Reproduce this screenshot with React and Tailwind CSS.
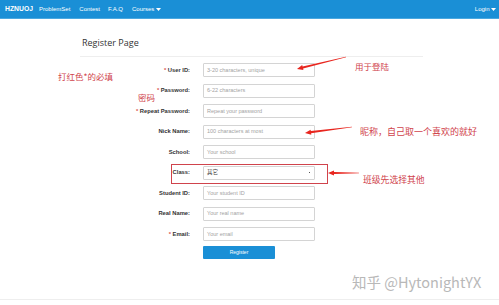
import React from 'react';

const sans = { fontFamily: '"Liberation Sans", Arial, sans-serif' };
const cjk = { fontFamily: '"Noto Sans CJK SC", "Noto Sans", sans-serif' };

const fields = [
  { label: 'User ID:', req: true, ph: '3-20 characters, unique' },
  { label: 'Password:', req: true, ph: '6-22 characters' },
  { label: 'Repeat Password:', req: true, ph: 'Repeat your password' },
  { label: 'Nick Name:', ph: '100 characters at most' },
  { label: 'School:', ph: 'Your school' },
  { label: 'Class:', select: '其它' },
  { label: 'Student ID:', ph: 'Your student ID' },
  { label: 'Real Name:', ph: 'Your real name' },
  { label: 'Email:', req: true, ph: 'Your email' },
];

function Caret({ className }) {
  return (
    <svg width="5" height="3" viewBox="0 0 5 3" className={className}>
      <path d="M0 0 L5 0 L2.5 3 Z" fill="currentColor" />
    </svg>
  );
}

// tapered red stroke, thin at the tail, arrow head at the tip
function arrow(tx, ty, hx, hy) {
  const len = Math.hypot(hx - tx, hy - ty);
  const dx = (hx - tx) / len;
  const dy = (hy - ty) / len;
  const nx = -dy;
  const ny = dx;
  const bx = hx - dx * 6;
  const by = hy - dy * 6;
  const p = [
    [tx + nx * 0.3, ty + ny * 0.3],
    [bx + nx * 1.1, by + ny * 1.1],
    [bx + nx * 2.6, by + ny * 2.6],
    [hx, hy],
    [bx - nx * 2.6, by - ny * 2.6],
    [bx - nx * 1.1, by - ny * 1.1],
    [tx - nx * 0.3, ty - ny * 0.3],
  ];
  return p.map((q) => q[0].toFixed(1) + ',' + q[1].toFixed(1)).join(' ');
}

export default function App() {
  return (
    <div className="relative w-[499px] h-[305px] overflow-hidden bg-white flex flex-col" style={sans}>
      {/* navbar */}
      <nav className="h-[19px] bg-[#1a8fd6] border-b border-[#4aa8e0] flex items-center pl-[5px] pr-[3px] text-white text-[6px]">
        <span className="font-bold text-[6.8px]">HZNUOJ</span>
        <span className="ml-[6px]">ProblemSet</span>
        <span className="ml-[9px]">Contest</span>
        <span className="ml-[8px]">F.A.Q</span>
        <span className="ml-[9px] flex items-center gap-[1.5px]">
          Courses <Caret />
        </span>
        <span className="ml-auto flex items-center gap-[1.5px]">
          Login <Caret />
        </span>
      </nav>

      <div className="pl-[80px] pr-[76px]">
        <h1 className="pt-[18px] pl-[2px] text-[9px] leading-[12px] text-[#333]" style={{ fontFamily: '"Open Sans", sans-serif' }}>
          Register Page
        </h1>
        <div className="mt-[7px] border-t border-[#eeeeee]" />

        <div className="mt-[6px] flex flex-col gap-[6.5px]">
          {fields.map((f) => (
            <div key={f.label} className="flex items-center h-[14px]">
              <div className="w-[110px] text-right font-bold text-[5.8px] text-[#333]">
                {f.req && <span className="text-[#d9534f] mr-[1.5px]">*</span>}
                {f.label}
              </div>
              {f.select ? (
                <div className="ml-[13px] w-[112px] h-[14px] border border-[#d4d4d4] rounded-[1px] flex items-center justify-between pl-[3px] pr-[4px] text-[5.5px] text-[#444]" style={cjk}>
                  <span>{f.select}</span>
                  <span className="w-[1.5px] h-[1.5px] bg-[#555]" />
                </div>
              ) : (
                <div className="ml-[13px] w-[112px] h-[14px] border border-[#d4d4d4] rounded-[1px] flex items-center pl-[3px] text-[5.5px] text-[#a3a3a3]">
                  {f.ph}
                </div>
              )}
            </div>
          ))}
          <div className="flex">
            <div className="ml-[123px] -mt-[1.5px] w-[72px] h-[13px] bg-[#1a8fd6] rounded-[1px] text-white text-[5px] flex items-center justify-center">
              Register
            </div>
          </div>
        </div>
      </div>

      <div className="mt-auto mb-[5px] border-t border-[#eeeeee]" />

      {/* annotations */}
      <div className="absolute left-[171px] top-[164px] w-[157px] h-[20px] border border-[#d0434c]" />
      <svg className="absolute inset-0 pointer-events-none" width="499" height="305">
        <polygon points={arrow(346, 57, 297, 69)} fill="#e8261f" />
        <polygon points={arrow(352, 127, 305, 133)} fill="#e8261f" />
        <polygon points={arrow(359, 173, 328, 173)} fill="#e8261f" />
      </svg>
      <div className="absolute left-[58px] top-[70px] text-[8.5px] leading-[12px] text-[#d0434c]" style={cjk}>打红色*的必填</div>
      <div className="absolute left-[138px] top-[91px] text-[8.5px] leading-[12px] text-[#d0434c]" style={cjk}>密码</div>
      <div className="absolute left-[355px] top-[60px] text-[8.5px] leading-[12px] text-[#d0434c]" style={cjk}>用于登陆</div>
      <div className="absolute left-[360px] top-[126px] text-[9px] leading-[12px] text-[#d0434c]" style={cjk}>昵称，自己取一个喜欢的就好</div>
      <div className="absolute left-[363px] top-[174px] text-[8.8px] leading-[12px] text-[#d0434c]" style={cjk}>班级先选择其他</div>
      <div className="absolute left-[352px] top-[273px] text-[14.5px] leading-[18px] text-[#b8b8b8]" style={cjk}>知乎 @HytonightYX</div>
    </div>
  );
}
